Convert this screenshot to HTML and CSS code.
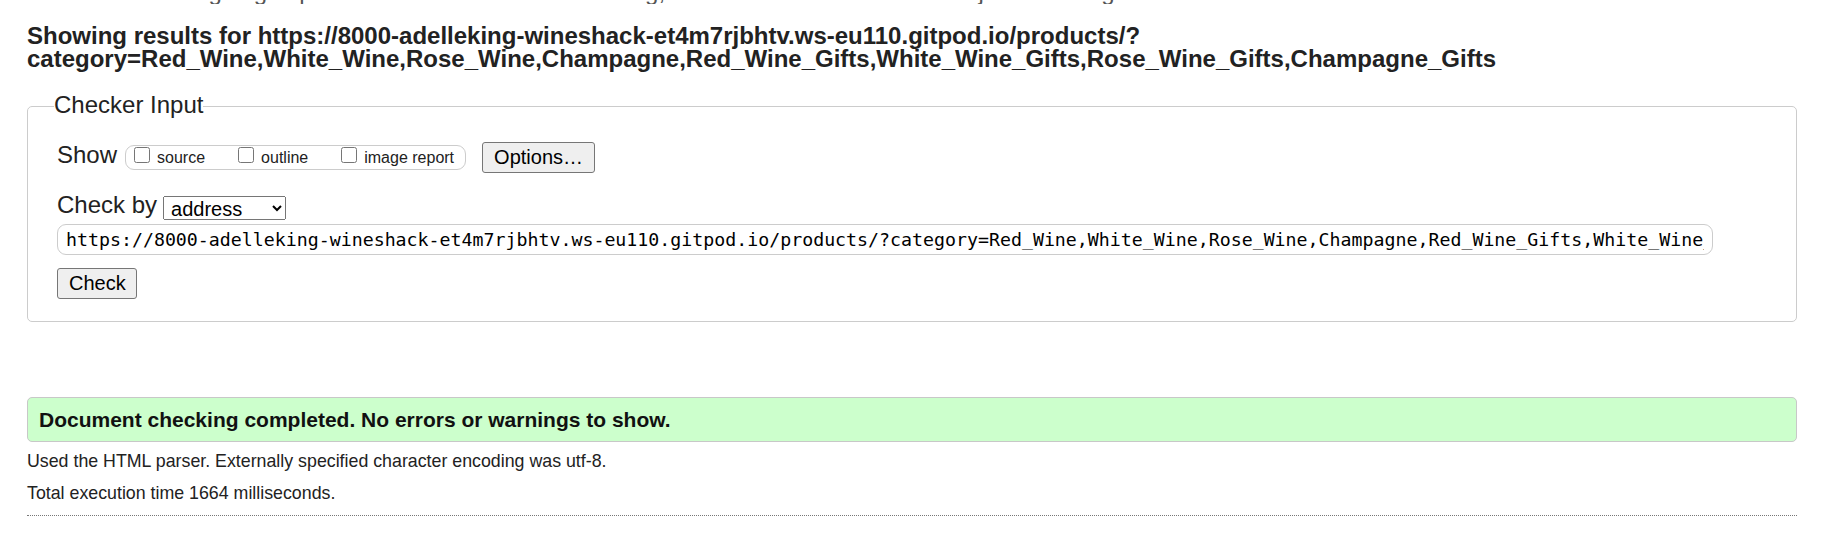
FILE: index.html
```html
<!DOCTYPE html>
<html lang="en">
<head>
<meta charset="utf-8">
<title>Showing results for https://8000-adelleking-wineshack-et4m7rjbhtv.ws-eu110.gitpod.io/products/ - Nu Html Checker</title>
<link rel="stylesheet" href="styles.css">
</head>
<body>
<div class="page">
  <p class="intro">This tool is an ongoing experiment in better HTML checking, and its behavior remains subject to change</p>
  <h2 class="title">Showing results for https://8000-adelleking-wineshack-et4m7rjbhtv.ws-eu110.gitpod.io/products/?<br>category=Red_Wine,White_Wine,Rose_Wine,Champagne,Red_Wine_Gifts,White_Wine_Gifts,Rose_Wine_Gifts,Champagne_Gifts</h2>
  <form class="checker">
    <fieldset class="checker-set">
      <legend class="checker-legend">Checker Input</legend>
      <div class="row row-show">
        <span class="row-label">Show</span>
        <div class="show-box">
          <label class="opt"><input type="checkbox" class="cb"><span class="opt-text">source</span></label>
          <label class="opt"><input type="checkbox" class="cb"><span class="opt-text">outline</span></label>
          <label class="opt"><input type="checkbox" class="cb"><span class="opt-text">image report</span></label>
        </div>
        <button type="button" class="btn btn-options">Options…</button>
      </div>
      <div class="row row-by">
        <span class="row-label">Check by</span>
        <select class="by-select">
          <option>address</option>
          <option>file upload</option>
          <option>text input</option>
        </select>
      </div>
      <input class="url-input" type="url" value="https://8000-adelleking-wineshack-et4m7rjbhtv.ws-eu110.gitpod.io/products/?category=Red_Wine,White_Wine,Rose_Wine,Champagne,Red_Wine_Gifts,White_Wine_Gifts,Rose_Wine_Gifts,Champagne_Gifts">
      <div class="row row-submit">
        <button type="button" class="btn btn-check">Check</button>
      </div>
    </fieldset>
  </form>
  <div class="success">Document checking completed. No errors or warnings to show.</div>
  <p class="details">Used the HTML parser. Externally specified character encoding was utf-8.</p>
  <p class="details">Total execution time 1664 milliseconds.</p>
  <div class="rule"></div>
</div>
</body>
</html>
```
FILE: styles.css
```css
html, body {
  margin: 0;
  padding: 0;
  background: #fff;
  overflow: hidden;
}
body {
  font-family: "Liberation Sans", Arial, sans-serif;
  color: #222;
}
.page {
  margin: 0 33px 0 27px;
}
.intro {
  margin: -20px 0 0 0;
  height: 24px;
  font-size: 24px;
  line-height: 24px;
  color: #555;
  white-space: nowrap;
  overflow: hidden;
}
.title {
  margin: 19.5px 0 0 0;
  font-size: 24px;
  line-height: 23px;
  font-weight: bold;
  color: #222;
}
.checker {
  margin: 0;
}
.checker-set {
  margin: 21px 0 0 0;
  padding: 19.5px 0 22px 29px;
  border: 1px solid #ccc;
  border-radius: 5px;
  min-width: 0;
}
.checker-legend {
  font-size: 24px;
  line-height: 28px;
  padding: 0 0 4px 0;
  margin-left: -3px;
  color: #222;
}
.row {
  display: flex;
  align-items: flex-start;
}
.row-label {
  font-size: 24px;
  line-height: 24px;
}
.row-show .row-label {
  margin-top: 1px;
}
.show-box {
  display: flex;
  align-items: flex-start;
  box-sizing: border-box;
  height: 25px;
  margin: 3px 0 0 8px;
  padding: 0 11px 0 8px;
  border: 1px solid #ccc;
  border-radius: 9px;
  gap: 33px;
}
.opt {
  display: flex;
  align-items: flex-start;
}
.cb {
  width: 16px;
  height: 16px;
  margin: 1px 7px 0 0;
}
.opt-text {
  font-size: 16px;
  line-height: 18px;
  margin-top: 3px;
}
.btn {
  font-family: "Liberation Sans", Arial, sans-serif;
  font-size: 20px;
  line-height: 23px;
  padding: 3px 11px;
  border: 1px solid #767676;
  border-radius: 3px;
  background: #efefef;
  color: #000;
}
.btn-options {
  margin-left: 16px;
  width: 113px;
}
.row-by {
  margin-top: 20px;
}
.by-select {
  margin: 3px 0 0 6px;
  width: 123px;
  height: 24px;
  font-family: "Liberation Sans", Arial, sans-serif;
  font-size: 20px;
  color: #000;
  padding: 0 0 0 3px;
}
.url-input {
  display: block;
  box-sizing: border-box;
  margin: 4px 0 0 0;
  width: 1656px;
  height: 31px;
  padding: 0 8px;
  border: 1px solid #ccc;
  border-radius: 9px;
  font-family: "DejaVu Sans Mono", "Liberation Mono", monospace;
  font-size: 18.25px;
  color: #000;
  background: #fff;
}
.row-submit {
  margin-top: 13px;
}
.btn-check {
  width: 80px;
}
.success {
  margin-top: 75px;
  box-sizing: border-box;
  height: 45px;
  padding: 0 11px;
  display: flex;
  align-items: center;
  background: #ccffcc;
  border: 1px solid #c8c8c8;
  border-radius: 5px;
  font-size: 21px;
  font-weight: bold;
  color: #111;
}
.details {
  margin: 9px 0 12px 0;
  font-size: 17.8px;
  line-height: 20px;
  color: #222;
}
.details + .details {
  margin-top: 0;
  margin-bottom: 0;
}
.rule {
  margin-top: 12px;
  border-top: 1px dotted #777;
}
```
